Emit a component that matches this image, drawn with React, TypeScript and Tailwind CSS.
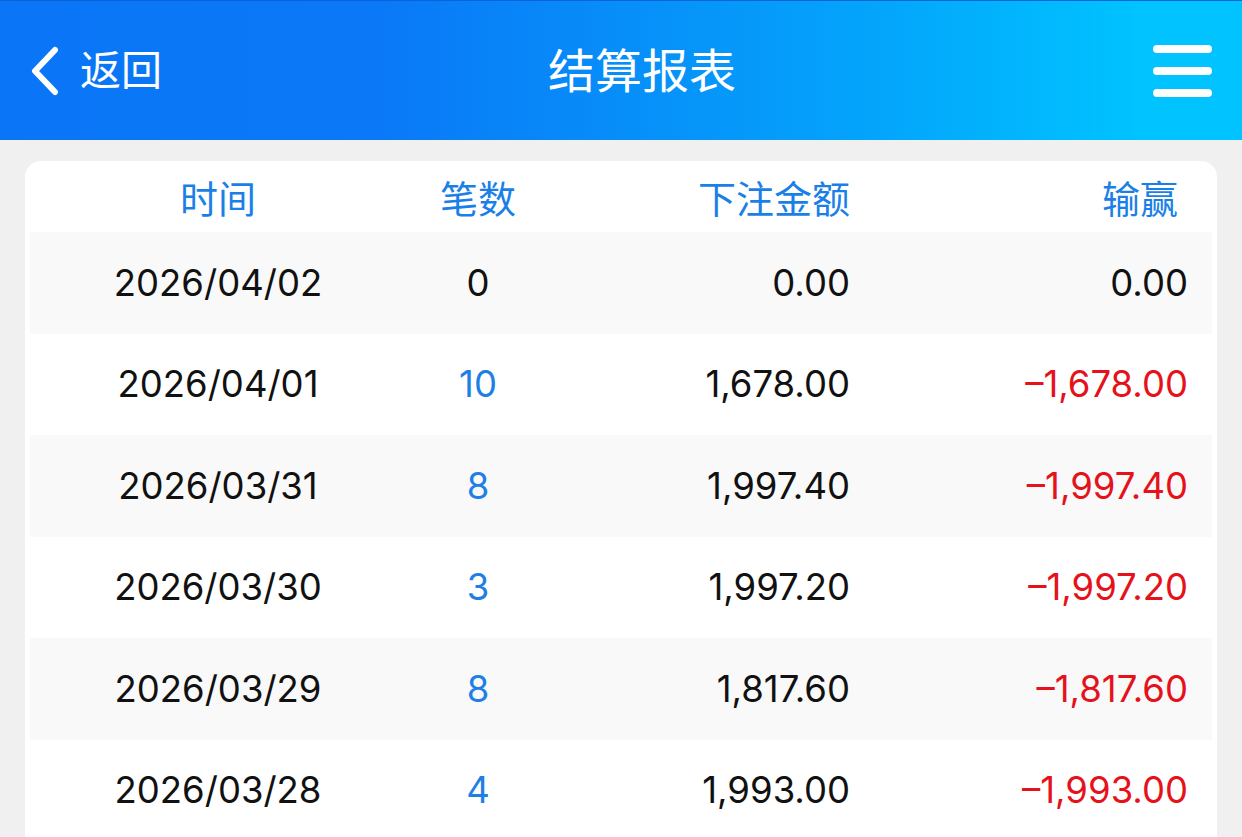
import React from "react";

const rows = [
  { d: "2026/04/02", n: "0", a: "0.00", w: "0.00" },
  { d: "2026/04/01", n: "10", a: "1,678.00", w: "–1,678.00" },
  { d: "2026/03/31", n: "8", a: "1,997.40", w: "–1,997.40" },
  { d: "2026/03/30", n: "3", a: "1,997.20", w: "–1,997.20" },
  { d: "2026/03/29", n: "8", a: "1,817.60", w: "–1,817.60" },
  { d: "2026/03/28", n: "4", a: "1,993.00", w: "–1,993.00" },
];

const font = { fontFamily: '"Inter", "Noto Sans CJK SC", sans-serif' };

export default function App() {
  return (
    <div className="w-[1242px] h-[837px] overflow-hidden bg-[#f0f0f0]" style={font}>
      <div className="h-[140px] flex items-center justify-between bg-[linear-gradient(90deg,#0a76f7_0%,#0a78f7_30%,#04a4fb_70%,#00c3ff_92%)] border-t border-[#0a62d8] relative">
        <div className="flex items-center pl-[28px] text-white">
          <svg width="34" height="50" viewBox="0 0 34 50" className="mr-[18px]">
            <path d="M27 4 L7 25 L27 46" fill="none" stroke="white" strokeWidth="6" strokeLinecap="round" strokeLinejoin="round" />
          </svg>
          <span className="text-[41px] leading-none">返回</span>
        </div>
        <div className="absolute left-[42px] right-0 text-center text-white text-[47px] leading-none pointer-events-none">结算报表</div>
        <div className="pr-[30px] flex flex-col gap-[14px]">
          <div className="w-[59px] h-[8px] rounded-full bg-white" />
          <div className="w-[59px] h-[8px] rounded-full bg-white" />
          <div className="w-[59px] h-[8px] rounded-full bg-white" />
        </div>
      </div>
      <div className="mx-[25px] mt-[21px] bg-white rounded-[16px] px-[5px] pb-[30px]">
        <div className="h-[71px] grid grid-cols-[376px_144px_300px_1fr] items-center text-[#1b7fe8] text-[38px] leading-none pt-[4px]">
          <div className="text-center">时间</div>
          <div className="text-center">笔数</div>
          <div className="text-right">下注金额</div>
          <div className="text-right pr-[34px]">输赢</div>
        </div>
        {rows.map((r, i) => (
          <div
            key={i}
            className={`h-[101.5px] grid grid-cols-[376px_144px_300px_1fr] items-center text-[36.5px] leading-none ${i % 2 === 0 ? "bg-[#f9f9f9]" : "bg-white"}`}
          >
            <div className="text-center text-[#111]">{r.d}</div>
            <div className={`text-center ${r.n === "0" ? "text-[#111]" : "text-[#1f7fe6]"}`}>{r.n}</div>
            <div className="text-right text-[#111]">{r.a}</div>
            <div className={`text-right pr-[24px] ${r.w === "0.00" ? "text-[#111]" : "text-[#e5121b]"}`}>{r.w}</div>
          </div>
        ))}
      </div>
    </div>
  );
}
